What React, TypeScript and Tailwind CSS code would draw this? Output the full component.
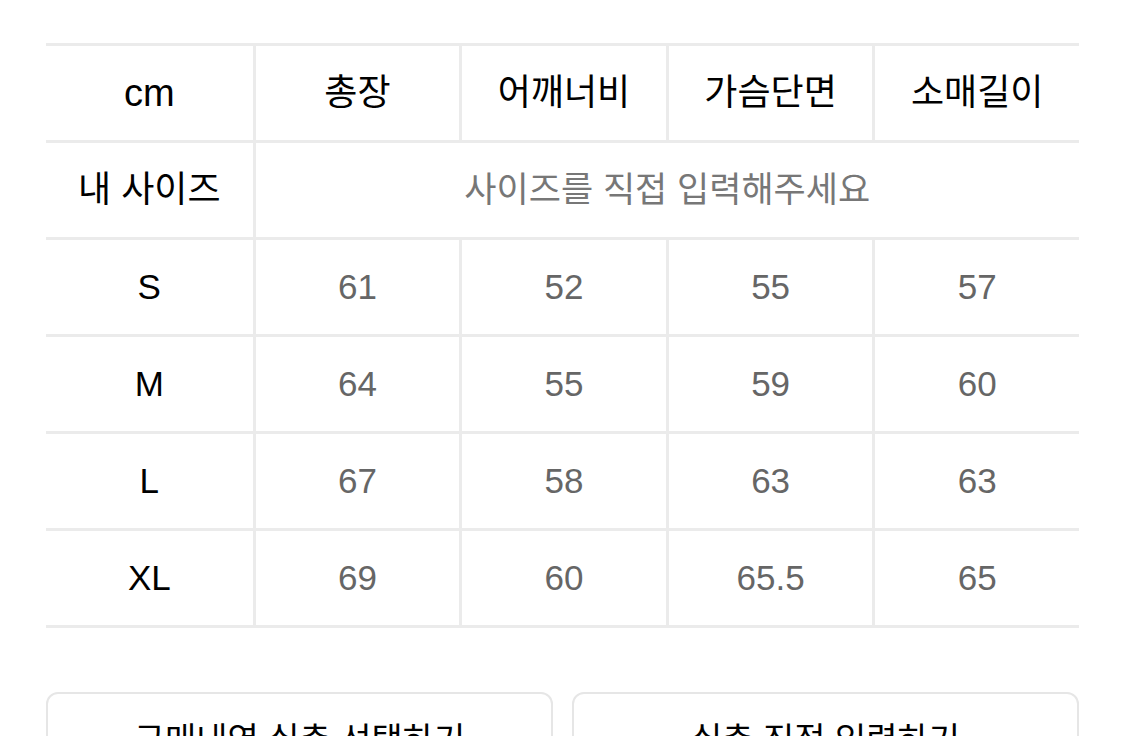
const headers = ["cm", "총장", "어깨너비", "가슴단면", "소매길이"];

const rows: [string, string, string, string, string][] = [
  ["S", "61", "52", "55", "57"],
  ["M", "64", "55", "59", "60"],
  ["L", "67", "58", "63", "63"],
  ["XL", "69", "60", "65.5", "65"],
];

const font = { fontFamily: '"Liberation Sans", "Noto Sans CJK KR", sans-serif' };

function Cell({ children, first, className = "" }: { children: React.ReactNode; first?: boolean; className?: string }) {
  return (
    <div
      className={`flex h-[94px] items-center justify-center ${first ? "" : "border-l-[3px] border-[#ebebeb]"} ${className}`}
    >
      {children}
    </div>
  );
}

export default function App() {
  return (
    <div className="min-h-[736px] bg-white px-[46px] pt-[43px]" style={font}>
      <div className="border-b-[3px] border-[#ebebeb]">
        <div className="grid grid-cols-5 border-t-[3px] border-[#ebebeb] text-[36px] text-black">
          {headers.map((h, i) => (
            <Cell key={h} first={i === 0} className={i === 0 ? "text-[38px]" : ""}>
              {h}
            </Cell>
          ))}
        </div>
        <div className="grid grid-cols-5 border-t-[3px] border-[#ebebeb]">
          <Cell first className="text-[36px] text-black">
            내 사이즈
          </Cell>
          <Cell className="col-span-4 text-[35px] text-[#777]">사이즈를 직접 입력해주세요</Cell>
        </div>
        {rows.map((r) => (
          <div key={r[0]} className="grid grid-cols-5 border-t-[3px] border-[#ebebeb]">
            {r.map((v, i) => (
              <Cell key={i} first={i === 0} className={i === 0 ? "text-[35px] text-black" : "text-[35px] text-[#666]"}>
                {v}
              </Cell>
            ))}
          </div>
        ))}
      </div>

      <div className="mt-[64px] flex gap-[19px]">
        <button className="flex h-[96px] flex-1 items-center justify-center rounded-[12px] border-2 border-[#e6e6e6] text-[34px] text-black">
          구매내역 실측 선택하기
        </button>
        <button className="flex h-[96px] flex-1 items-center justify-center rounded-[12px] border-2 border-[#e6e6e6] text-[34px] text-black">
          실측 직접 입력하기
        </button>
      </div>
    </div>
  );
}
